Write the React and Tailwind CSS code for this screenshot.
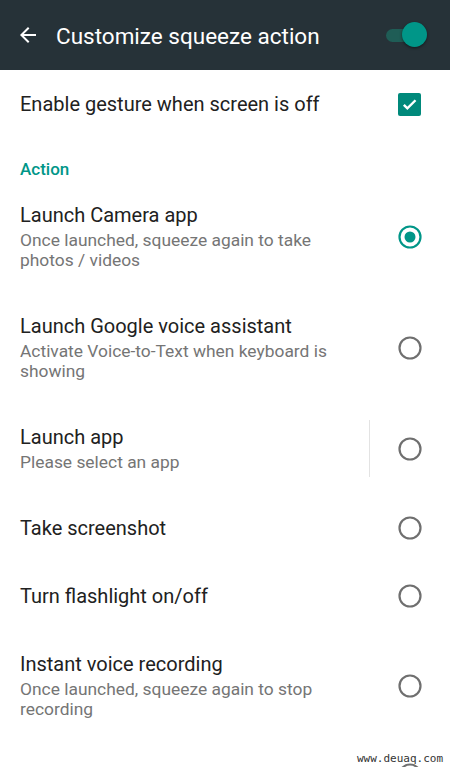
import React from "react";

function Radio({ checked }) {
  return (
    <svg width="26" height="26" viewBox="0 0 26 26" className="shrink-0 -my-[2px]">
      <circle cx="13" cy="13" r="10.5" fill="none" stroke={checked ? "#009688" : "#6f6f6f"} strokeWidth="2.2" />
      {checked && <circle cx="13" cy="13" r="5.5" fill="#009688" />}
    </svg>
  );
}

function Row({ title, sub, checked, divider }) {
  return (
    <div className="flex items-center py-[22px] pl-5 pr-[27px]">
      <div className="flex-1 min-w-0">
        <div className="text-[20px] leading-[24px] text-[#212121] whitespace-nowrap">{title}</div>
        {sub && (
          <div className="mt-[3px] text-[17.4px] leading-[20px] text-[#757575] pr-[40px]">{sub}</div>
        )}
      </div>
      {divider && <div className="w-px self-stretch bg-[#e3e3e3] mr-[27px] -my-[5px]" />}
      <Radio checked={checked} />
    </div>
  );
}

export default function App() {
  return (
    <div className="relative w-[450px] h-[767px] overflow-hidden bg-white" style={{ fontFamily: "Roboto, 'Noto Sans', sans-serif" }}>
      <div className="h-[70px] bg-[#263238] flex items-center pl-4 pr-[22px]">
        <svg width="24" height="24" viewBox="0 0 24 24" className="shrink-0">
          <path d="M20 11H7.83l5.59-5.59L12 4l-8 8 8 8 1.41-1.41L7.83 13H20v-2z" fill="#ffffff" />
        </svg>
        <div className="ml-4 flex-1 text-white text-[22.5px] leading-[28px] mt-[2px]">Customize squeeze action</div>
        <div className="relative w-[42px] h-[26px] flex items-center">
          <div className="w-[34px] h-[13px] rounded-full bg-[#1f5d56]" />
          <div className="absolute right-[1px] top-[0px] w-[25px] h-[25px] rounded-full bg-[#009688] shadow-[0_1px_3px_rgba(0,0,0,0.5)]" />
        </div>
      </div>

      <div className="h-[68px] flex items-center pl-5 pr-[29px]">
        <div className="flex-1 text-[20px] leading-[24px] text-[#212121]">Enable gesture when screen is off</div>
        <div className="w-[23px] h-[23px] rounded-[2px] bg-[#00897b] flex items-center justify-center">
          <svg width="17" height="17" viewBox="0 0 24 24">
            <path d="M4 12.5l5 5L20.5 6" fill="none" stroke="#ffffff" strokeWidth="3.4" />
          </svg>
        </div>
      </div>

      <div className="pt-[21px] pb-[2px] pl-5 text-[17px] leading-[20px] font-medium text-[#009688]">Action</div>

      <Row title="Launch Camera app" sub="Once launched, squeeze again to take photos / videos" checked />
      <Row title="Launch Google voice assistant" sub="Activate Voice-to-Text when keyboard is showing" />
      <Row title="Launch app" sub="Please select an app" divider />
      <Row title="Take screenshot" />
      <Row title="Turn flashlight on/off" />
      <Row title="Instant voice recording" sub="Once launched, squeeze again to stop recording" />
      <Row title="Launch HTC Sense Companion" />

      <div className="absolute left-[357px] top-[752px] text-[11px] leading-[13px] text-[#333]" style={{ fontFamily: "'DejaVu Sans Mono', monospace" }}>www.deuaq.com</div>
    </div>
  );
}
